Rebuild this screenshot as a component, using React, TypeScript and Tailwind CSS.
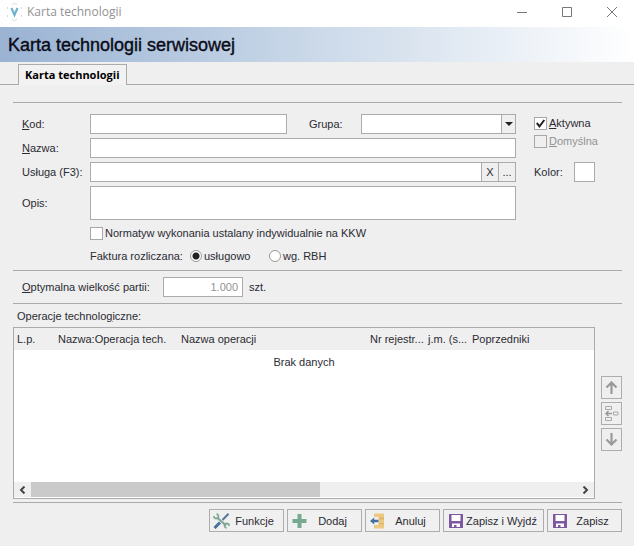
import { useState, type ReactNode } from "react";

const field = "border border-[#ababab] bg-white outline-none px-1";
const smallButton =
  "flex h-[23px] w-[21px] items-center justify-center border border-[#adadad] bg-[#efefef]";

function Rule() {
  return <hr className="border-0 border-t border-[#ababab]" />;
}

function AppMark() {
  return (
    <svg width="15" height="18" viewBox="0 0 15 18" fill="none" aria-hidden="true">
      <path d="M4.500 5 7.500 12 10.500 5" stroke="#6fb3d0" strokeWidth="2.200" />
      <path
        d="M.5 6V4M.5 12v2M14.500 6V4M14.500 12v2M5 1.500 7.500.5 10 1.500M5 16.500l2.500 1 2.500-1"
        stroke="#d3dbe0"
      />
    </svg>
  );
}

function ToolsIcon() {
  return (
    <svg width="17" height="16" viewBox="0 0 17 16" fill="none" aria-hidden="true">
      <path d="M15.500.800 9.500 7" stroke="#55789a" strokeWidth="2" />
      <path d="M7 9.500 1.500 15" stroke="#47709f" strokeWidth="3" />
      <path d="M4 4.500 13 12.500" stroke="#7fa795" strokeWidth="2.200" />
      <path
        d="M.8 3.200C1 5 2.500 6 4.500 5.200 6 4 5.600 1.800 3.600.800M16.200 12.800c-.2-1.800-1.700-2.800-3.700-2-1.500 1.200-1.100 3.400.9 4.400"
        stroke="#7fa795"
        strokeWidth="1.800"
      />
    </svg>
  );
}

function PlusIcon() {
  return (
    <svg width="15" height="14" viewBox="0 0 15 14" aria-hidden="true">
      <path d="M5.500 0h4v5H14.500v4h-5v5h-4V9H.5V5h5z" fill="#77a992" />
    </svg>
  );
}

function ExitIcon() {
  return (
    <svg width="15" height="16" viewBox="0 0 15 16" aria-hidden="true">
      <path d="M4 .5h10v15H4V12h4.500V4H4z" fill="#ecc980" />
      <path d="M9 4.500h5v2H9zM9 10h5v1.500H9z" fill="#dfb865" />
      <path d="M0 8 4.200 4.500v2.300H8.500v2.400H4.200v2.300z" fill="#456f9f" />
    </svg>
  );
}

function DiskIcon() {
  return (
    <svg width="14" height="14" viewBox="0 0 14 14" aria-hidden="true">
      <path d="M0 0h14v14H0z" fill="#7d58a0" />
      <path d="M2.500 1h9v6h-9zM3 9.500h8V13H7.500v-2H5v2H3z" fill="#fff" />
    </svg>
  );
}

function ArrowIcon({ down = false }: { down?: boolean }) {
  return (
    <svg
      width="13"
      height="13"
      viewBox="0 0 13 13"
      fill="none"
      className={down ? "rotate-180" : ""}
      aria-hidden="true"
    >
      <path d="M6.500 13V2M1.500 6.500l5-5 5 5" stroke="#999" strokeWidth="2.200" />
    </svg>
  );
}

function InsertIcon() {
  return (
    <svg width="15" height="17" viewBox="0 0 15 17" fill="none" aria-hidden="true">
      <path d="M1.500 1.500h6v3h-6zM1.500 12.500h6v3h-6zM14 7H9.500v3H14z" stroke="#aaa" />
      <path d="M8 8.500H2M4.500 6l-2.500 2.500 2.500 2.500" stroke="#999" strokeWidth="1.500" />
    </svg>
  );
}

function Chevron({ right = false }: { right?: boolean }) {
  return (
    <svg
      width="7"
      height="8"
      viewBox="0 0 7 8"
      fill="none"
      className={right ? "rotate-180" : ""}
      aria-hidden="true"
    >
      <path d="M5.500.5 2 4l3.500 3.500" stroke="#444" strokeWidth="2" />
    </svg>
  );
}

function Check({
  id,
  children,
  checked,
  disabled,
}: {
  id: string;
  children: ReactNode;
  checked?: boolean;
  disabled?: boolean;
}) {
  return (
    <div className={`flex h-[18px] items-center gap-[2px] ${disabled ? "text-[#929292]" : ""}`}>
      <span className="relative flex">
        <input
          id={id}
          type="checkbox"
          defaultChecked={checked}
          disabled={disabled}
          className="peer h-[13px] w-[13px] appearance-none border border-[#a8a8a8] bg-white disabled:bg-[#efefef]"
        />
        <svg
          viewBox="0 0 13 13"
          fill="none"
          className="pointer-events-none absolute inset-0 hidden h-[13px] w-[13px] peer-checked:block"
          aria-hidden="true"
        >
          <path d="M2.800 6 5.500 9.300 10.300 3" stroke="#222" strokeWidth="2" />
        </svg>
      </span>
      <label htmlFor={id} className="whitespace-nowrap">{children}</label>
    </div>
  );
}

function ActionButton({
  icon,
  wide,
  children,
}: {
  icon: ReactNode;
  wide?: boolean;
  children: ReactNode;
}) {
  return (
    <button
      className={`flex h-[23px] items-center border border-[#adadad] bg-[#f0f0f0] pr-1 pl-[3px] ${wide ? "w-[101px]" : "w-[75px]"}`}
    >
      <span className="flex w-[17px] shrink-0 justify-center">{icon}</span>
      <span className="flex-1 text-center whitespace-nowrap">{children}</span>
    </button>
  );
}

const columns = [
  "L.p.",
  "Nazwa:Operacja tech.",
  "Nazwa operacji",
  "Nr rejestr...",
  "j.m. (s...",
  "Poprzedniki",
];

export default function App() {
  const [billing, setBilling] = useState("service");
  const radio =
    "h-3 w-3 appearance-none rounded-full border border-[#999] bg-white checked:bg-[radial-gradient(circle,#222_0_3px,#fff_4px)]";

  return (
    <div className="min-h-screen bg-[#efefef] font-['Liberation_Sans',Arial,sans-serif] text-[11px] leading-4 text-[#2b2b33]">
      <header className="flex h-[27px] items-center bg-white pb-[3px] pl-[7px] font-['Open_Sans','Noto_Sans',sans-serif] text-[12px] text-[#929292]">
        <AppMark />
        <span className="ml-[5px] flex-1">Karta technologii</span>
        <div className="flex text-[#777]">
          <button aria-label="Minimalizuj" className="flex h-6 w-[45px] items-center justify-center">
            <svg width="10" height="10" stroke="currentColor"><path d="M0 5.500h10" /></svg>
          </button>
          <button aria-label="Maksymalizuj" className="flex h-6 w-[45px] items-center justify-center">
            <svg width="10" height="10" fill="none" stroke="currentColor"><path d="M.5.500h9v9h-9z" /></svg>
          </button>
          <button aria-label="Zamknij" className="flex h-6 w-[45px] items-center justify-center">
            <svg width="10" height="10" stroke="currentColor"><path d="m0 0 10 10M10 0 0 10" /></svg>
          </button>
        </div>
      </header>

      <div className="flex h-[35px] items-center bg-linear-to-r from-[#9ab3d3] via-[#cbd9e9] to-white pl-2">
        <h1 className="text-[18px] leading-5 text-[#0b0b18] [-webkit-text-stroke:0.4px]">
          Karta technologii serwisowej
        </h1>
      </div>

      <div role="tablist" className="flex h-[23px] items-end border-b border-[#ababab] pl-[18px]">
        <button
          role="tab"
          aria-selected="true"
          className="-mb-px h-[21px] border border-b-0 border-[#ababab] bg-[#f2f2f2] px-[6px] font-['Open_Sans','Noto_Sans',sans-serif] font-bold text-black"
        >
          Karta technologii
        </button>
      </div>

      <main className="pt-[17px] pr-3 pl-[13px]">
        <Rule />
        <form onSubmit={(e) => e.preventDefault()}>
          <div className="flex gap-[18px] pt-[11px] pl-[9px]">
            <div className="flex min-w-0 flex-1 flex-col gap-1">
              <div className="flex items-center">
                <label htmlFor="code" className="w-[68px]"><u>K</u>od:</label>
                <input id="code" className={`${field} h-5 min-w-0 flex-1`} />
                <label htmlFor="group" className="ml-[22px] w-[52px]">Grupa:</label>
                <div className="relative flex w-[155px]">
                  <select id="group" className={`${field} h-5 w-full appearance-none`} />
                  <span className="pointer-events-none absolute inset-y-px right-px flex w-[14px] items-center justify-center border-l border-[#ababab] bg-[#efefef]">
                    <svg width="8" height="4" aria-hidden="true"><path d="M0 0h8L4 4z" fill="#222" /></svg>
                  </span>
                </div>
              </div>
              <div className="flex items-center">
                <label htmlFor="name" className="w-[68px]"><u>N</u>azwa:</label>
                <input id="name" className={`${field} h-5 min-w-0 flex-1`} />
              </div>
              <div className="flex items-center">
                <label htmlFor="service" className="w-[68px] whitespace-nowrap">Usługa (F3):</label>
                <input id="service" className={`${field} h-5 min-w-0 flex-1`} />
                <button className="h-5 w-4 border-y border-[#ababab]">X</button>
                <button className="h-5 w-[18px] border border-[#ababab]">...</button>
              </div>
              <div className="flex items-center">
                <label htmlFor="description" className="w-[68px]">Opis:</label>
                <textarea id="description" className={`${field} h-[34px] min-w-0 flex-1 resize-none`} />
              </div>
              <div className="flex flex-col gap-1 pl-[68px]">
                <Check id="norm">Normatyw wykonania ustalany indywidualnie na KKW</Check>
                <div role="radiogroup" aria-labelledby="billing-label" className="flex h-5 items-center">
                  <span id="billing-label" className="w-[100px] whitespace-nowrap">Faktura rozliczana:</span>
                  <div className="flex w-[79px] items-center gap-[2px]">
                    <input id="by-service" type="radio" name="billing" checked={billing === "service"} onChange={() => setBilling("service")} className={radio} />
                    <label htmlFor="by-service">usługowo</label>
                  </div>
                  <div className="flex items-center gap-[2px]">
                    <input id="by-hours" type="radio" name="billing" checked={billing === "hours"} onChange={() => setBilling("hours")} className={radio} />
                    <label htmlFor="by-hours">wg. RBH</label>
                  </div>
                </div>
              </div>
            </div>
            <div className="w-[88px]">
              <Check id="active" checked><u>A</u>ktywna</Check>
              <Check id="default" disabled><u>D</u>omyślna</Check>
              <div className="mt-3 flex items-center">
                <label htmlFor="color" className="w-10">Kolor:</label>
                <input
                  id="color"
                  type="color"
                  defaultValue="#ffffff"
                  className="h-5 w-[21px] appearance-none border border-[#ababab] bg-white p-0 [&::-webkit-color-swatch]:border-0 [&::-webkit-color-swatch-wrapper]:p-0"
                />
              </div>
            </div>
          </div>

          <div className="mt-1"><Rule /></div>
          <div className="flex items-center py-[6px] pl-[9px]">
            <label htmlFor="batch" className="w-[141px]"><u>O</u>ptymalna wielkość partii:</label>
            <input id="batch" defaultValue="1.000" className={`${field} h-5 w-20 text-right text-[#929292]`} />
            <span className="ml-[6px]">szt.</span>
          </div>
          <Rule />

          <h2 className="pt-1 pb-[3px] pl-1">Operacje technolo<u>g</u>iczne:</h2>
          <div className="flex gap-[6px]">
            <div className="flex min-h-[172px] min-w-0 flex-1 flex-col border border-[#ababab] bg-white">
              <table className="w-full table-fixed text-left">
                <colgroup>
                  <col className="w-[41px]" />
                  <col className="w-[123px]" />
                  <col />
                  <col className="w-[58px]" />
                  <col className="w-[44px]" />
                  <col className="w-[125px]" />
                </colgroup>
                <thead className="h-[22px] bg-[#efefef]">
                  <tr>
                    {columns.map((c) => (
                      <th key={c} className="pl-[3px] font-normal whitespace-nowrap">{c}</th>
                    ))}
                  </tr>
                </thead>
                <tbody>
                  <tr><td colSpan={6} className="h-6 text-center">Brak danych</td></tr>
                </tbody>
              </table>
              <div className="mt-auto mb-px flex h-[15px] bg-[#efefef]">
                <button aria-label="Przewiń w lewo" className="flex w-[17px] items-center justify-center"><Chevron /></button>
                <div className="flex-1"><div className="h-full w-[53%] bg-[#cacaca]" /></div>
                <button aria-label="Przewiń w prawo" className="flex w-[17px] items-center justify-center"><Chevron right /></button>
              </div>
            </div>
            <div className="flex w-[21px] flex-col justify-center gap-[3px]">
              <button aria-label="W górę" className={smallButton}><ArrowIcon /></button>
              <button aria-label="Wstaw" className={smallButton}><InsertIcon /></button>
              <button aria-label="W dół" className={smallButton}><ArrowIcon down /></button>
            </div>
          </div>

          <div className="mt-[3px]"><Rule /></div>
          <div className="flex justify-end gap-[3px] pt-[6px] pb-3">
            <ActionButton icon={<ToolsIcon />}>Funkcje</ActionButton>
            <ActionButton icon={<PlusIcon />}>Dodaj</ActionButton>
            <ActionButton icon={<ExitIcon />}>Anuluj</ActionButton>
            <ActionButton icon={<DiskIcon />} wide>Zapisz i Wyjdź</ActionButton>
            <ActionButton icon={<DiskIcon />}>Zapisz</ActionButton>
          </div>
        </form>
      </main>
    </div>
  );
}
